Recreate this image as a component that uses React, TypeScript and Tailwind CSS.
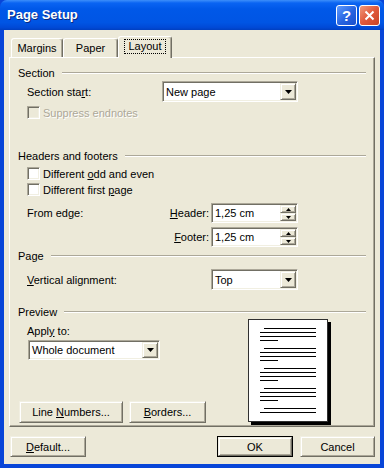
import React from "react";

const sunken =
  "border border-t-[#ACA899] border-l-[#ACA899] border-r-white border-b-white shadow-[inset_1px_1px_#716F64,inset_-1px_-1px_#F1EFE2]";
const raised =
  "bg-[#ECE9D8] border border-t-[#F1EFE2] border-l-[#F1EFE2] border-r-[#716F64] border-b-[#716F64] shadow-[inset_1px_1px_#fff,inset_-1px_-1px_#ACA899]";

function Arrow() {
  return (
    <svg width="7" height="4" viewBox="0 0 7 4">
      <path d="M0 0h7L3.5 4z" fill="#000" />
    </svg>
  );
}

function Combo({ value, className }: { value: string; className: string }) {
  return (
    <div className={`flex bg-white p-[1px] ${sunken} ${className}`}>
      <span className="flex-1 pl-[2px] self-center">{value}</span>
      <div className={`w-[16px] flex items-center justify-center ${raised}`}>
        <Arrow />
      </div>
    </div>
  );
}

function Spin({ value }: { value: string }) {
  return (
    <div className={`flex w-[87px] h-[20px] bg-white p-[1px] ${sunken}`}>
      <span className="flex-1 pl-[2px] self-center">{value}</span>
      <div className="w-[16px] flex flex-col">
        <div className={`flex-1 flex items-center justify-center ${raised}`}>
          <svg width="5" height="3" viewBox="0 0 5 3">
            <path d="M2.5 0L5 3H0z" fill="#000" />
          </svg>
        </div>
        <div className={`flex-1 flex items-center justify-center ${raised}`}>
          <svg width="5" height="3" viewBox="0 0 5 3">
            <path d="M0 0h5L2.5 3z" fill="#000" />
          </svg>
        </div>
      </div>
    </div>
  );
}

function Group({ label }: { label: string }) {
  return (
    <div className="flex items-center h-[14px]">
      <span>{label}</span>
      <div className="flex-1 ml-[7px] h-[2px] border-t border-t-[#ACA899] border-b border-b-white" />
    </div>
  );
}

function Check({ children, disabled }: { children: React.ReactNode; disabled?: boolean }) {
  return (
    <div className="flex items-center h-[13px] ml-[9px]">
      <div className={`w-[13px] h-[13px] ${disabled ? "bg-[#ECE9D8]" : "bg-white"} ${sunken}`} />
      <span
        className={`ml-[3px] ${disabled ? "text-[#ACA899] [text-shadow:1px_1px_0_#fff]" : ""}`}
      >
        {children}
      </span>
    </div>
  );
}

function Btn({
  children,
  className,
  isDefault,
}: {
  children: React.ReactNode;
  className: string;
  isDefault?: boolean;
}) {
  return (
    <div className={`${isDefault ? "border border-black" : ""} ${className}`}>
      <div className={`h-full flex items-center justify-center ${raised}`}>
        <span>{children}</span>
      </div>
    </div>
  );
}

function Para({ lines }: { lines: string[] }) {
  return (
    <div className="flex flex-col gap-[3px]">
      {lines.map((l, i) => (
        <div
          key={i}
          className={`h-px bg-black ${
            l === "i" ? "ml-[4px] w-[52px]" : l === "f" ? "w-[56px]" : "w-[18px]"
          }`}
        />
      ))}
    </div>
  );
}

export default function App() {
  return (
    <div className="w-[384px] h-[468px] flex flex-col bg-[#0845d8] font-['Liberation_Sans',Arial,sans-serif] text-[11px] text-black leading-[14px] select-none">
      {/* title bar */}
      <div className="h-[30px] flex items-center pl-[7px] pr-[4px] rounded-t-[7px] bg-[linear-gradient(to_bottom,#3d8ffa_0%,#0a64f2_10%,#0058e8_30%,#0055e4_75%,#0049d6_92%,#003fc0_100%)]">
        <span className="flex-1 text-white font-bold text-[13px] [text-shadow:1px_1px_0_#0a2a80]">
          Page Setup
        </span>
        <div className="flex gap-[2px] mt-[1px]">
          <div className="w-[21px] h-[21px] rounded-[3px] border border-white flex items-center justify-center bg-[linear-gradient(135deg,#5e9bff_0%,#2663e0_55%,#1a4fcc_100%)] text-white font-bold text-[15px]">
            ?
          </div>
          <div className="w-[21px] h-[21px] rounded-[3px] border border-white flex items-center justify-center bg-[linear-gradient(135deg,#f09a7c_0%,#e0583a_50%,#c84424_100%)]">
            <svg width="11" height="11" viewBox="0 0 11 11">
              <path d="M1.5 1.5l8 8M9.5 1.5l-8 8" stroke="#fff" strokeWidth="2" />
            </svg>
          </div>
        </div>
      </div>

      {/* client area */}
      <div className="flex-1 mx-[4px] mb-[4px] bg-[#ECE9D8] flex flex-col pt-[6px] px-[5px]">
        {/* tabs */}
        <div className="h-[21px] flex items-start pl-[2px]">
          <div className="mt-[2px] h-[19px] w-[52px] flex items-center justify-center rounded-t-[3px] border-l border-t border-white border-r border-r-[#716F64] shadow-[inset_-1px_0_#ACA899]">
            Margins
          </div>
          <div className="mt-[2px] h-[19px] w-[55px] flex items-center justify-center rounded-t-[3px] border-l border-t border-white border-r border-r-[#716F64] shadow-[inset_-1px_0_#ACA899]">
            Paper
          </div>
          <div className="relative z-10 h-[22px] w-[54px] flex items-center justify-center pb-[2px] bg-[#ECE9D8] rounded-t-[3px] border-l border-t border-white border-r border-r-[#716F64] shadow-[inset_-1px_0_#ACA899]">
            <span className="px-[3px] leading-[13px] border border-dotted border-black">Layout</span>
          </div>
        </div>

        {/* panel */}
        <div className="h-[370px] flex flex-col border-t border-l border-white border-r border-b border-r-[#716F64] border-b-[#716F64] shadow-[inset_-1px_-1px_#ACA899] pl-[8px] pr-[8px] pt-[8px]">
          <Group label="Section" />
          <div className="mt-[1px] h-[21px] flex items-center ml-[9px]">
            <span className="w-[135px]">
              Section sta<u>r</u>t:
            </span>
            <Combo value="New page" className="w-[136px] h-[21px]" />
          </div>
          <div className="mt-[4px]">
            <Check disabled>Suppress endnotes</Check>
          </div>

          <div className="mt-[30px]">
            <Group label="Headers and footers" />
          </div>
          <div className="mt-[4px]">
            <Check>
              Different <u>o</u>dd and even
            </Check>
          </div>
          <div className="mt-[3px]">
            <Check>
              Different first <u>p</u>age
            </Check>
          </div>
          <div className="mt-[7px] h-[20px] flex items-center ml-[9px]">
            <div className="w-[182px] flex justify-between">
              <span>From edge:</span>
              <span>
                <u>H</u>eader:
              </span>
            </div>
            <div className="ml-[2px]">
              <Spin value="1,25 cm" />
            </div>
          </div>
          <div className="mt-[4px] h-[20px] flex items-center ml-[9px]">
            <div className="w-[182px] flex justify-end">
              <span>
                <u>F</u>ooter:
              </span>
            </div>
            <div className="ml-[2px]">
              <Spin value="1,25 cm" />
            </div>
          </div>

          <div className="mt-[2px]">
            <Group label="Page" />
          </div>
          <div className="mt-[6px] h-[21px] flex items-center ml-[9px]">
            <span className="w-[184px]">
              <u>V</u>ertical alignment:
            </span>
            <Combo value="Top" className="w-[87px] h-[21px]" />
          </div>

          <div className="mt-[15px]">
            <Group label="Preview" />
          </div>
          <div className="h-[106px] flex">
            <div className="w-[230px] flex flex-col pt-[5px]">
              <span className="ml-[9px] h-[14px]">
                Appl<u>y</u> to:
              </span>
              <Combo value="Whole document" className="mt-[2px] ml-[10px] w-[132px] h-[20px]" />
              <div className="mt-[41px] ml-[1px] flex gap-[6px]">
                <Btn className="w-[104px] h-[22px]">
                  Line <u>N</u>umbers...
                </Btn>
                <Btn className="w-[77px] h-[22px]">
                  <u>B</u>orders...
                </Btn>
              </div>
            </div>
            <div className="w-[80px] h-[103px] bg-white border border-[#303030] shadow-[3px_3px_0_#000] flex flex-col pt-[8px] pl-[11px] gap-[7px]">
              <Para lines={["i", "f", "f", "s"]} />
              <Para lines={["i", "f", "f", "s"]} />
              <Para lines={["i", "f", "f", "s"]} />
              <Para lines={["i", "f", "f", "s"]} />
              <Para lines={["i", "f"]} />
            </div>
          </div>
        </div>

        {/* bottom buttons */}
        <div className="mt-[9px] flex pl-[1px]">
          <Btn className="w-[76px] h-[21px]">
            <u>D</u>efault...
          </Btn>
          <div className="flex-1" />
          <Btn className="w-[76px] h-[21px]" isDefault>
            OK
          </Btn>
          <Btn className="ml-[7px] w-[75px] h-[21px]">Cancel</Btn>
        </div>
      </div>
    </div>
  );
}
